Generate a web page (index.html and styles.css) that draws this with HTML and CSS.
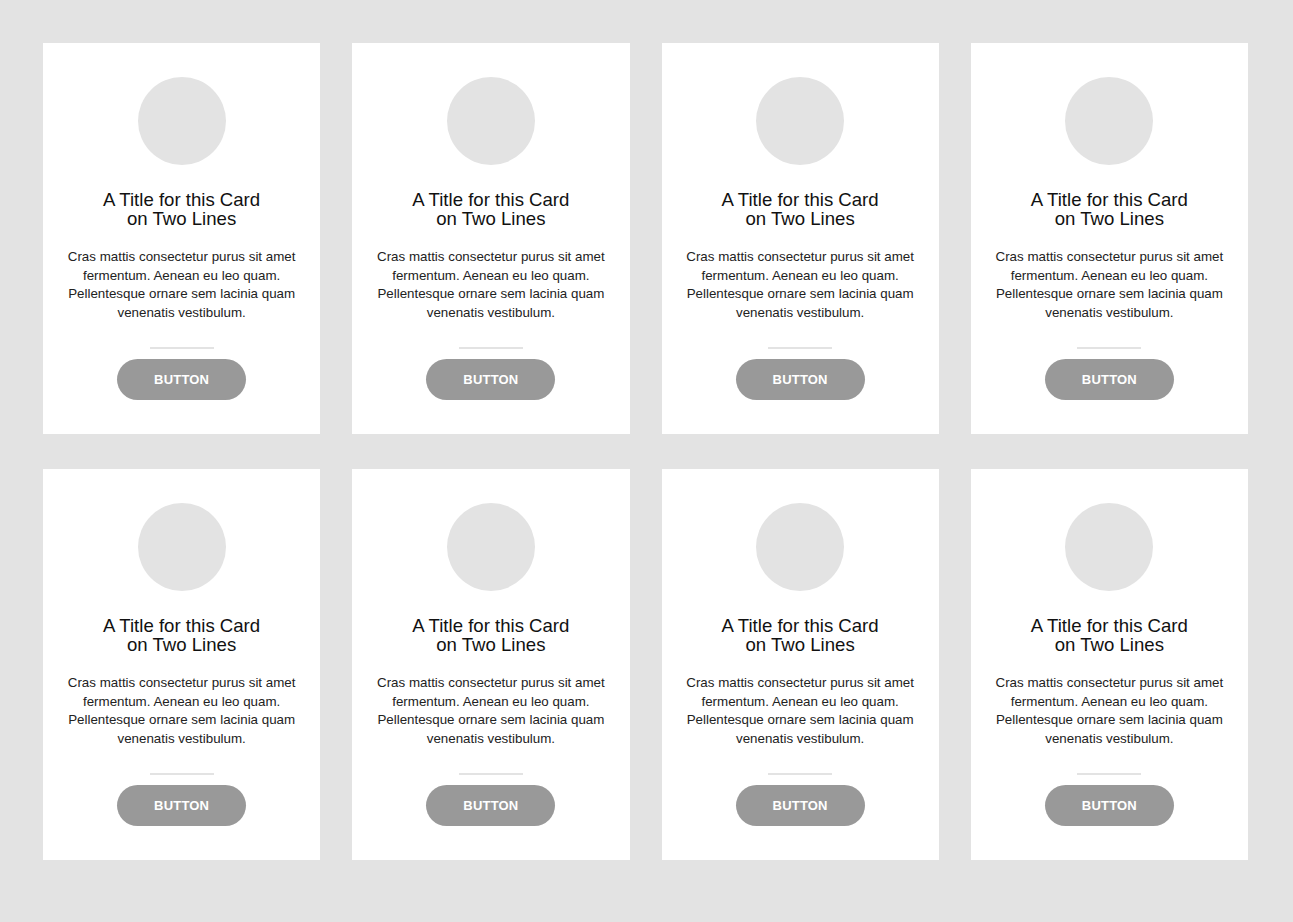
FILE: index.html
```html
<!DOCTYPE html>
<html lang="en">
<head>
<meta charset="utf-8">
<title>Cards</title>
<link rel="stylesheet" href="styles.css">
</head>
<body>
<main class="grid">
  <article class="card"><div class="avatar"></div><h2 class="title">A Title for this Card<br>on Two Lines</h2><p class="text">Cras mattis consectetur purus sit amet fermentum. Aenean eu leo quam. Pellentesque ornare sem lacinia quam venenatis vestibulum.</p><hr class="divider"><button class="btn">BUTTON</button></article>
  <article class="card"><div class="avatar"></div><h2 class="title">A Title for this Card<br>on Two Lines</h2><p class="text">Cras mattis consectetur purus sit amet fermentum. Aenean eu leo quam. Pellentesque ornare sem lacinia quam venenatis vestibulum.</p><hr class="divider"><button class="btn">BUTTON</button></article>
  <article class="card"><div class="avatar"></div><h2 class="title">A Title for this Card<br>on Two Lines</h2><p class="text">Cras mattis consectetur purus sit amet fermentum. Aenean eu leo quam. Pellentesque ornare sem lacinia quam venenatis vestibulum.</p><hr class="divider"><button class="btn">BUTTON</button></article>
  <article class="card"><div class="avatar"></div><h2 class="title">A Title for this Card<br>on Two Lines</h2><p class="text">Cras mattis consectetur purus sit amet fermentum. Aenean eu leo quam. Pellentesque ornare sem lacinia quam venenatis vestibulum.</p><hr class="divider"><button class="btn">BUTTON</button></article>
  <article class="card"><div class="avatar"></div><h2 class="title">A Title for this Card<br>on Two Lines</h2><p class="text">Cras mattis consectetur purus sit amet fermentum. Aenean eu leo quam. Pellentesque ornare sem lacinia quam venenatis vestibulum.</p><hr class="divider"><button class="btn">BUTTON</button></article>
  <article class="card"><div class="avatar"></div><h2 class="title">A Title for this Card<br>on Two Lines</h2><p class="text">Cras mattis consectetur purus sit amet fermentum. Aenean eu leo quam. Pellentesque ornare sem lacinia quam venenatis vestibulum.</p><hr class="divider"><button class="btn">BUTTON</button></article>
  <article class="card"><div class="avatar"></div><h2 class="title">A Title for this Card<br>on Two Lines</h2><p class="text">Cras mattis consectetur purus sit amet fermentum. Aenean eu leo quam. Pellentesque ornare sem lacinia quam venenatis vestibulum.</p><hr class="divider"><button class="btn">BUTTON</button></article>
  <article class="card"><div class="avatar"></div><h2 class="title">A Title for this Card<br>on Two Lines</h2><p class="text">Cras mattis consectetur purus sit amet fermentum. Aenean eu leo quam. Pellentesque ornare sem lacinia quam venenatis vestibulum.</p><hr class="divider"><button class="btn">BUTTON</button></article>
</main>
</body>
</html>
```

FILE: styles.css
```css
* { box-sizing: border-box; }
html, body {
  margin: 0;
  padding: 0;
  background: #e3e3e3;
  font-family: "Liberation Sans", Arial, sans-serif;
  color: #111;
}
.grid {
  width: 1205px;
  margin: 43px 0 0 43px;
  display: grid;
  grid-template-columns: repeat(4, 1fr);
  column-gap: 32px;
  row-gap: 35px;
}
.card {
  background: #fff;
  height: 391px;
  padding: 34px 18px 34px;
  display: flex;
  flex-direction: column;
  align-items: center;
  text-align: center;
}
.avatar {
  width: 88px;
  height: 88px;
  border-radius: 50%;
  background: #e3e3e3;
  flex: none;
}
.title {
  margin: 25px 0 0;
  font-size: 18.6px;
  line-height: 19px;
  font-weight: 400;
  color: #111;
}
.text {
  margin: 20px 0 0;
  font-size: 13.35px;
  line-height: 18.6px;
  color: #222;
}
.divider {
  margin: 25px 0 0;
  width: 64px;
  height: 2px;
  border: 0;
  background: #e3e3e3;
  flex: none;
}
.btn {
  margin-top: 10px;
  width: 129px;
  height: 41px;
  border: 0;
  border-radius: 21px;
  background: #999;
  color: #fff;
  font-family: "Liberation Sans", Arial, sans-serif;
  font-weight: 700;
  font-size: 13px;
  letter-spacing: 0.2px;
  flex: none;
}
```
